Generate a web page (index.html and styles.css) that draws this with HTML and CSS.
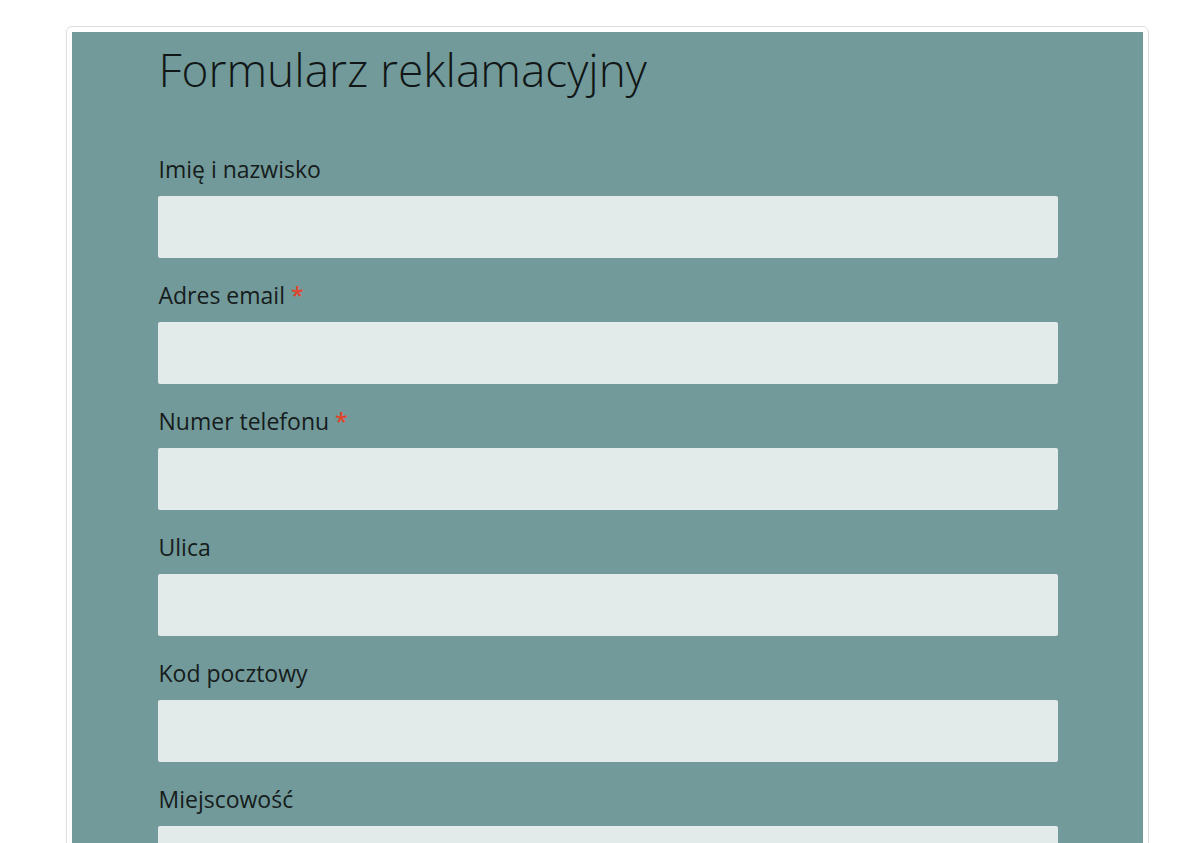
FILE: index.html
```html
<!DOCTYPE html>
<html lang="pl">
<head>
    <meta charset="utf-8">
    <meta name="viewport" content="width=device-width, initial-scale=1.0">

    <title>Formularz reklamacyjny</title>

    <link rel="stylesheet" href="styles.css">
</head>
<body>
    <div class="card">
        <div class="panel">
            <form class="complaint">
                <h1>Formularz reklamacyjny</h1>

                <div class="field">
                    <label for="name">Imię i nazwisko</label>
                    <input id="name" type="text">
                </div>

                <div class="field">
                    <label for="email">Adres email <span class="required">*</span></label>
                    <input id="email" type="email">
                </div>

                <div class="field">
                    <label for="phone">Numer telefonu <span class="required">*</span></label>
                    <input id="phone" type="tel">
                </div>

                <div class="field">
                    <label for="street">Ulica</label>
                    <input id="street" type="text">
                </div>

                <div class="field">
                    <label for="zip">Kod pocztowy</label>
                    <input id="zip" type="text">
                </div>

                <div class="field">
                    <label for="city">Miejscowość</label>
                    <input id="city" type="text">
                </div>
            </form>
        </div>
    </div>
</body>
</html>
```

FILE: styles.css
```css
html,
body {
    background: #fff;
    color: #161c1c;
    font-family: "Open Sans", "Noto Sans", sans-serif;
    -webkit-font-smoothing: antialiased;
}

body {
    margin: 0;
    padding: 26px 51px 0 66px;
    overflow: hidden;
    height: 843px;
    box-sizing: border-box;
}

.card {
    border: 1px solid #dedede;
    border-radius: 6px;
    padding: 5px;
    background: #fff;
}

.panel {
    background: #729a9a;
    padding: 10px 0 40px;
}

.complaint {
    max-width: 900px;
    margin: 0 auto;
}

h1 {
    font-weight: 300;
    font-size: 46px;
    line-height: 50px;
    margin: 2px 0 60px 1px;
    color: #111616;
}

.field {
    margin-bottom: 22px;
}

label {
    display: block;
    font-size: 23px;
    line-height: 30px;
    margin: 0 0 12px 1px;
}

.required {
    color: #e0442a;
    font-weight: 600;
}

input {
    display: block;
    width: 100%;
    height: 62px;
    box-sizing: border-box;
    border: none;
    border-radius: 2px;
    background: #e2ebea;
    font: inherit;
    padding: 0 16px;
}
```
